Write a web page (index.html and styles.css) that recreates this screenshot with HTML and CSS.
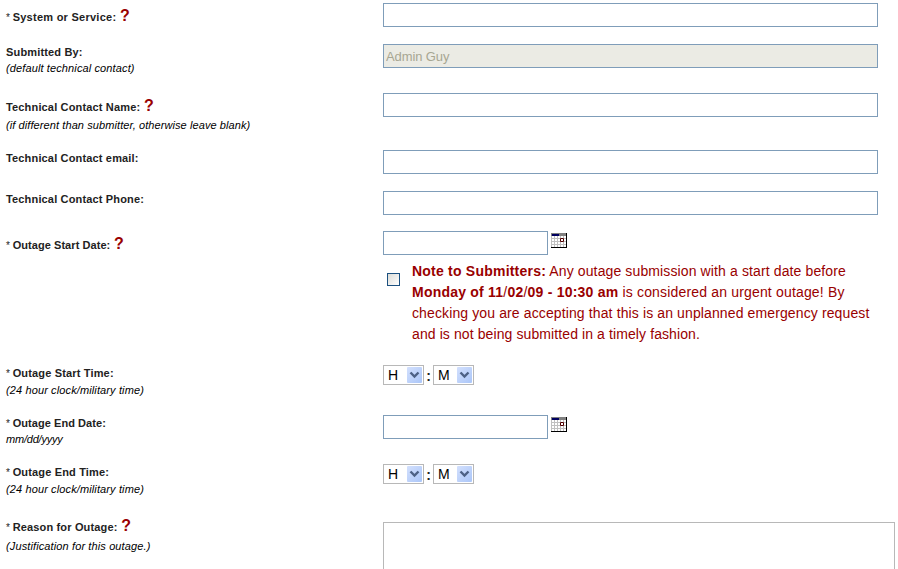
FILE: index.html
```html
<!DOCTYPE html>
<html lang="en">
<head>
<meta charset="utf-8">
<title>Outage Submission</title>
<link rel="stylesheet" href="styles.css">
</head>
<body>
<svg width="0" height="0" class="defs">
  <defs>
    <linearGradient id="blue" x1="0" y1="0" x2="1" y2="1"><stop offset="0" stop-color="#d3e0fd"/><stop offset="1" stop-color="#abc6f8"/></linearGradient>
    <symbol id="calendar" viewBox="0 0 16 15">
      <path fill="#fff" d="M0 0h16v15H0z"/>
      <path fill="#c0c0c0" d="M0 0h1v14H0zM3 3h1v11H3zM6 3h1v11H6zM9 3h1v11H9zM12 3h1v11h-1zM0 5h15v1H0zM0 8h15v1H0zM0 11h15v1H0z"/>
      <path fill="#808080" d="M0 0h16v3H0z"/>
      <path fill="#000060" d="M1 1h7v2H1z"/>
      <path fill="#000" d="M15 0h1v15h-1zM0 14h16v1H0z"/>
      <path fill="#fff" stroke="#500000" d="M9.5 5.500h3v3h-3z"/>
    </symbol>
    <symbol id="arrow" viewBox="0 0 15 16">
      <rect width="15" height="16" rx="1" fill="url(#blue)"/>
      <path d="M3.500 5.500l4 4 4-4" fill="none" stroke="#4d6185" stroke-width="2.400"/>
    </symbol>
  </defs>
</svg>
<form class="form">
  <div class="row r41">
    <div class="label low"><i class="star">*</i> <b class="wide">System or Service:</b> <b class="help">?</b></div>
    <div><input class="text" type="text"></div>
  </div>
  <div class="row r49">
    <div class="label"><b>Submitted By:</b><em>(default technical contact)</em></div>
    <div><input class="text" type="text" value="Admin Guy" disabled></div>
  </div>
  <div class="row r57">
    <div class="label low"><b>Technical Contact Name:</b> <b class="help">?</b><em class="gap2">(if different than submitter, otherwise leave blank)</em></div>
    <div><input class="text" type="text"></div>
  </div>
  <div class="row r41">
    <div class="label"><b>Technical Contact email:</b></div>
    <div><input class="text" type="text"></div>
  </div>
  <div class="row r40">
    <div class="label"><b>Technical Contact Phone:</b></div>
    <div><input class="text" type="text"></div>
  </div>
  <div class="row r134">
    <div class="label low"><i class="star">*</i> <b class="narrow">Outage Start Date:</b> <b class="help">?</b></div>
    <div>
      <div class="inline"><input class="text date" type="text"><svg class="cal"><use href="#calendar"/></svg></div>
      <div class="urgent">
        <input class="check" type="checkbox">
        <p class="note"><span class="l1"><b>Note to Submitters:</b> Any outage submission with a start date before</span><span class="l2"><b>Monday of 11<i>/</i>02<i>/</i>09 - 10:30 am</b> is considered an urgent outage! By</span><span class="l3">checking you are accepting that this is an unplanned emergency request</span><span class="l4">and is not being submitted in a timely fashion.</span></p>
      </div>
    </div>
  </div>
  <div class="row r50">
    <div class="label"><i class="star">*</i> <b>Outage Start Time:</b><em class="gap1">(24 hour clock/military time)</em></div>
    <div class="inline">
      <span class="pick"><select><option>H</option></select><svg><use href="#arrow"/></svg></span><b class="colon">:</b><span class="pick"><select><option>M</option></select><svg><use href="#arrow"/></svg></span>
    </div>
  </div>
  <div class="row r49">
    <div class="label"><i class="star">*</i> <b class="narrow">Outage End Date:</b><em class="tight">mm/dd/yyyy</em></div>
    <div class="inline"><input class="text date" type="text"><svg class="cal"><use href="#calendar"/></svg></div>
  </div>
  <div class="row r55">
    <div class="label"><i class="star">*</i> <b>Outage End Time:</b><em class="gap1">(24 hour clock/military time)</em></div>
    <div class="inline">
      <span class="pick"><select><option>H</option></select><svg><use href="#arrow"/></svg></span><b class="colon">:</b><span class="pick"><select><option>M</option></select><svg><use href="#arrow"/></svg></span>
    </div>
  </div>
  <div class="row r50">
    <div class="label"><i class="star">*</i> <b>Reason for Outage:</b> <b class="help">?</b><em class="gap3">(Justification for this outage.)</em></div>
    <div><textarea class="reason"></textarea></div>
  </div>
</form>
</body>
</html>
```
FILE: styles.css
```css
* { box-sizing: border-box; }
body { margin: 0; height: 569px; overflow: hidden; background: #fff; color: #222; font-family: "Liberation Sans", Arial, sans-serif; }
.defs { display: block; }
.form { padding: 3px 0 0 6px; }
.row { display: grid; grid-template-columns: 377px 1fr; align-items: start; }
.r40 { height: 40px; }
.r41 { height: 41px; }
.r49 { height: 49px; }
.r50 { height: 50px; }
.r55 { height: 55px; }
.r57 { height: 57px; }
.r134 { height: 134px; }
.label { font-size: 11px; line-height: 16px; letter-spacing: 0.16px; white-space: nowrap; }
.low { padding-top: 6px; }
.wide { letter-spacing: 0.26px; }
.narrow { letter-spacing: 0.06px; }
.label em { display: block; color: #000; font-size: 11px; letter-spacing: 0.12px; }
.label .gap1 { margin-top: 1px; }
.label .gap2 { margin-top: 2px; letter-spacing: 0.09px; }
.label .gap3 { margin-top: 3px; }
.label .tight { letter-spacing: -0.2px; }
.star { font-style: normal; font-size: 10px; letter-spacing: -0.5px; line-height: 0; }
.help { margin-left: 0.5px; color: #900; font-size: 16px; line-height: 0; letter-spacing: 0; }
.text { display: block; width: 495px; height: 24px; margin: 0; padding: 0 2px; border: 1px solid #7f9db9; border-radius: 0; background: #fff; font: 13px "Liberation Sans", Arial, sans-serif; letter-spacing: -0.1px; }
.text:disabled { background: #ebebe4; color: #a7a692; }
.date { width: 165px; }
.inline { display: flex; align-items: flex-start; }
.cal { width: 16px; height: 15px; margin: 2px 0 0 3px; }
.urgent { display: flex; color: #900; padding-top: 6px; }
.check { appearance: none; width: 13px; height: 13px; margin: 12px 12px 0 4px; border: 1px solid #1c5180; background: linear-gradient(135deg, #dcdcd7, #fff); }
.note { margin: 0; font-size: 14px; line-height: 21px; letter-spacing: 0.12px; }
.note span { display: block; white-space: nowrap; }
.note b { letter-spacing: 0.22px; }
.note .l2 { letter-spacing: 0.17px; }
.note .l4 { letter-spacing: 0.1px; }
.note i { font-style: normal; font-weight: normal; }
.pick { position: relative; width: 41px; height: 20px; }
.pick select { appearance: none; display: block; width: 41px; height: 20px; margin: 0; padding: 0 0 0 4px; border: 1px solid #b8b8b8; border-radius: 0; background: #fff; color: #000; font: 14px "Liberation Sans", Arial, sans-serif; }
.pick svg { position: absolute; right: 2px; top: 2px; width: 15px; height: 16px; pointer-events: none; }
.colon { width: 9px; text-align: center; font-size: 14px; line-height: 22px; }
.reason { display: block; width: 512px; height: 47px; margin: 3px 0 0; border: 1px solid #b8b8b8; border-bottom: 0; border-radius: 0; background: #fff; resize: none; }
```
